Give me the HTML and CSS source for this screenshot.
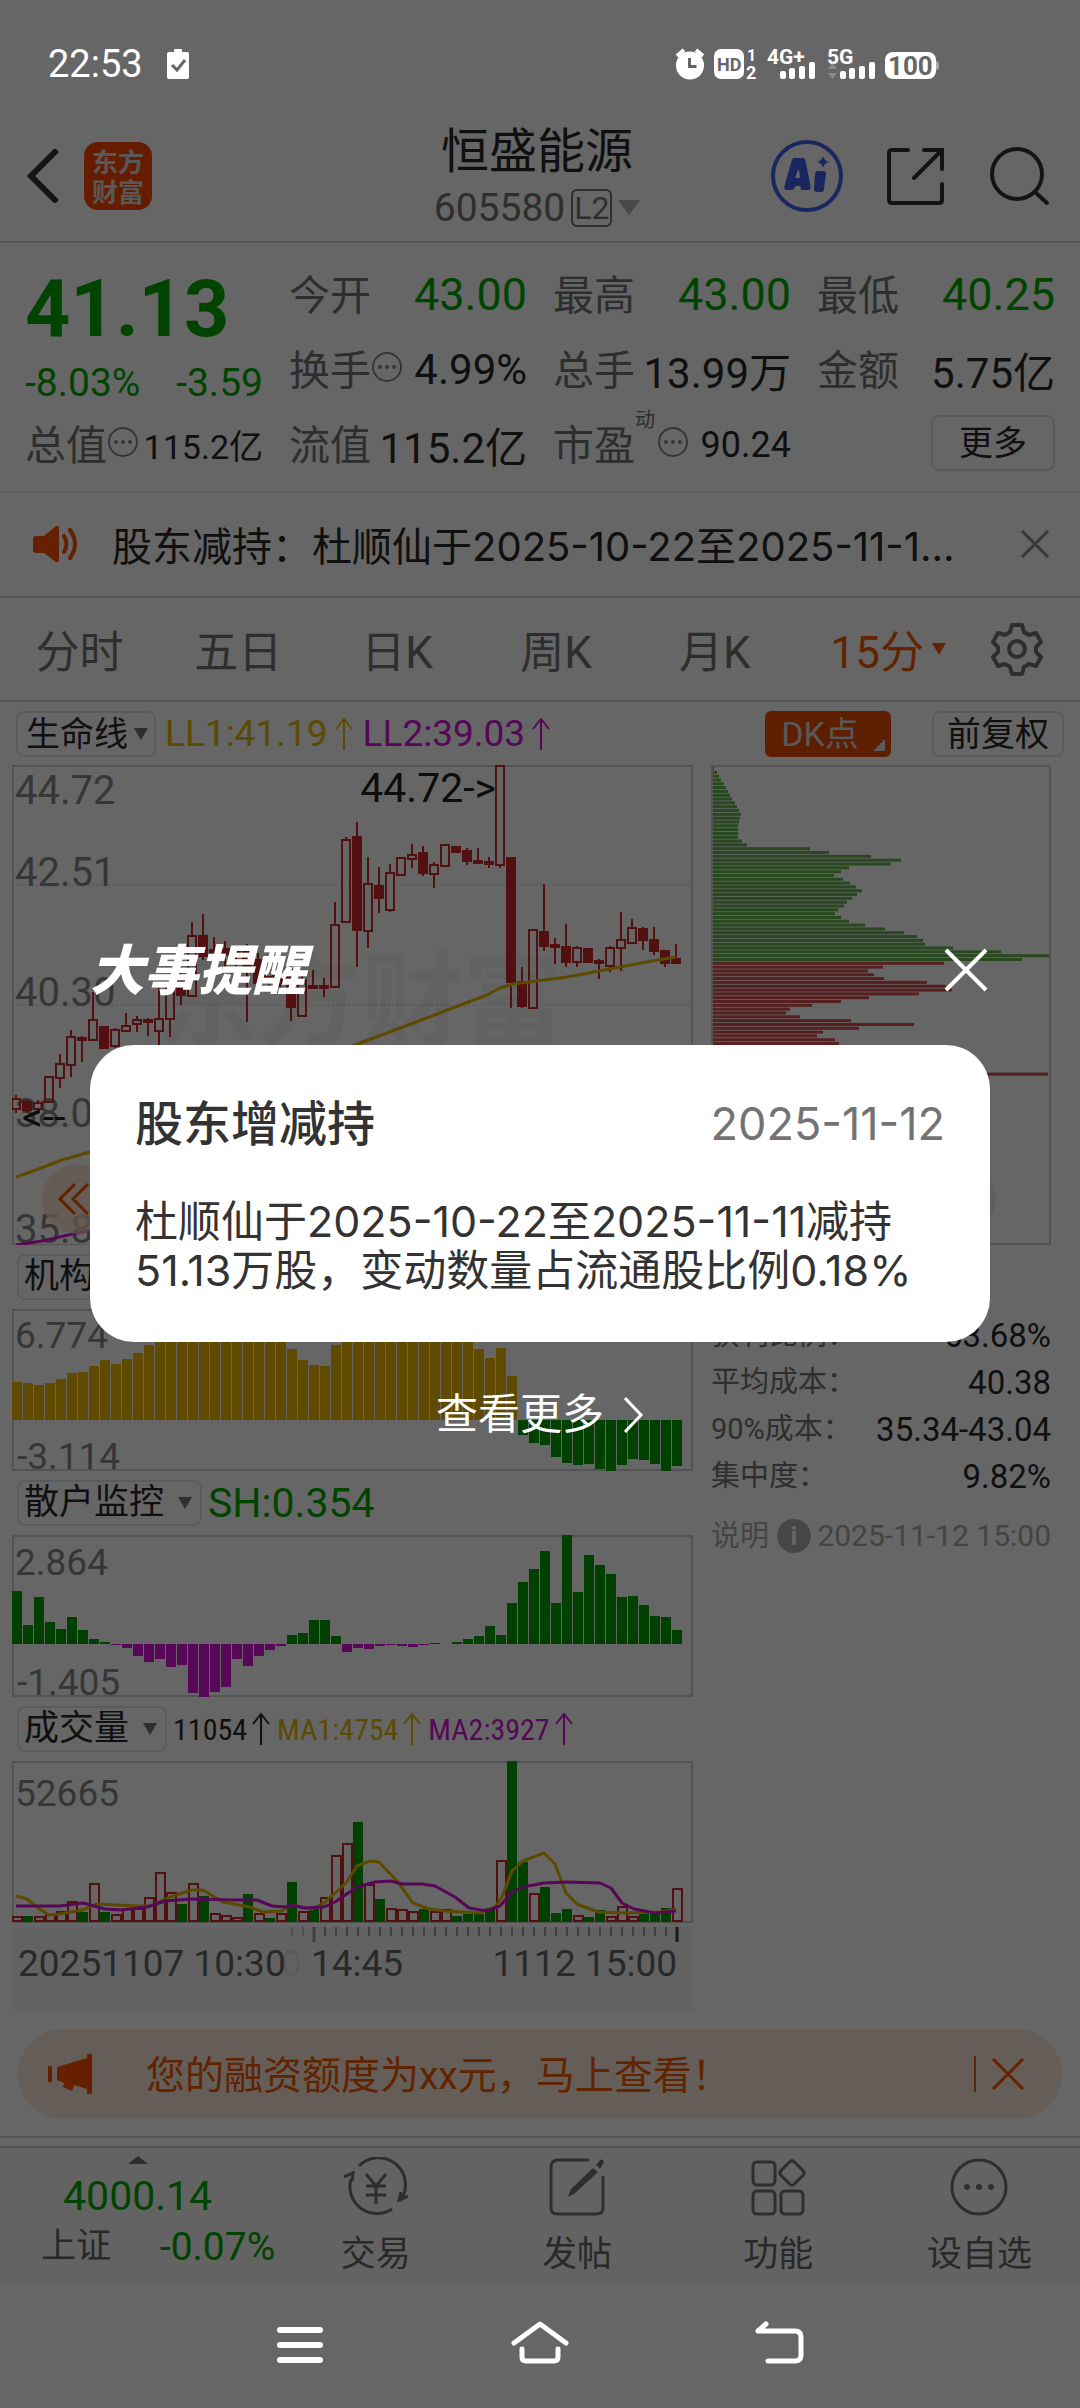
FILE: index.html
```html
<!DOCTYPE html>
<html lang="zh-CN">
<head>
<meta charset="utf-8">
<meta name="viewport" content="width=device-width, initial-scale=1">
<title>恒盛能源 605580</title>
<link rel="stylesheet" href="styles.css">
</head>
<body>
<div class="phone">

  <div class="status-bar">
    <div class="status-left">
      <span class="clock">22:53</span>
      <svg width="22" height="30" viewBox="0 0 22 30"><path fill="#fff" d="M2 3h5V1q0-1 1-1h6q1 0 1 1v2h5q2 0 2 2v23q0 2-2 2H2q-2 0-2-2V5q0-2 2-2z"/><path d="M5 16l5 5 8-10" fill="none" stroke="#666" stroke-width="3"/></svg>
    </div>
    <svg class="status-icons" width="280" height="40" viewBox="672 43 280 40">
      <g fill="#fff">
        <circle cx="690" cy="64.500" r="14"/>
        <path d="M677 55l7-6M703 55l-7-6" stroke="#fff" stroke-width="4"/>
        <rect x="714" y="48" width="30" height="30" rx="7"/>
        <text x="747" y="60" font-size="16" font-weight="700">1</text>
        <text x="746" y="78" font-size="18" font-weight="700">2</text>
        <text x="767" y="63" font-size="21" font-weight="700">4G+</text>
        <text x="827" y="63" font-size="21" font-weight="700">5G</text>
        <rect x="780" y="70" width="6" height="8" rx="2"/><rect x="789" y="67" width="6" height="11" rx="2"/><rect x="799" y="65" width="6" height="13" rx="2"/><rect x="809" y="61" width="6" height="17" rx="2"/>
        <rect x="840" y="70" width="6" height="8" rx="2"/><rect x="849" y="67" width="6" height="11" rx="2"/><rect x="859" y="65" width="6" height="13" rx="2"/><rect x="869" y="61" width="6" height="17" rx="2"/>
        <rect x="885" y="51" width="51" height="27" rx="8"/>
      </g>
      <path d="M936 60q3 0 3 4.500t-3 4.500z" fill="#aaa"/>
      <path d="M828 68l4.500-6 4.500 6zM828 72l4.500 6 4.500-6z" fill="#8a8a8a"/>
      <path d="M689.500 57v8.500h7" fill="none" stroke="#666" stroke-width="3"/>
      <g fill="#666" font-weight="700"><text x="717" y="70" font-size="18">HD</text><text x="888" y="74" font-size="26">100</text></g>
    </svg>
  </div>

  <header class="header">
    <div class="header-side">
      <button class="icon-btn" aria-label="返回"><svg width="36" height="56" viewBox="0 0 36 56"><path d="M31 4L7 28l24 24" fill="none" stroke="#333" stroke-width="6" stroke-linecap="round"/></svg></button>
      <a class="logo" href="#"><span>东方</span><span>财富</span></a>
    </div>
    <div class="stock-name">
      <h1>恒盛能源</h1>
      <div class="stock-code"><span>605580</span><span class="level">L2</span><i class="tri tri-light"></i></div>
    </div>
    <div class="header-side header-tools">
      <button class="icon-btn" aria-label="Ai"><svg width="74" height="74" viewBox="0 0 74 74"><circle cx="37" cy="37" r="34" fill="none" stroke="#4060f0" stroke-width="4"/><g fill="#4060f0"><path fill-rule="evenodd" d="M24 19h8q3 0 3.500 3l5 25q1 4-3 4h-5q-2 0-2-2v-2h-5l-1 2q-1 2-3 2h-5q-3 0-2-4l7-25q1-3 2.500-3zm4 12l-3 8h5l-1-8z"/><path d="M48 32h5q3 0 3 3l-2 15q0 3-3 3h-4q-3 0-3-3l1-15q0-3 3-3z"/><path d="M53 17q1 5 6 6-5 1-6 6-1-5-6-6 5-1 6-6z"/></g></svg></button>
      <button class="icon-btn" aria-label="分享"><svg width="60" height="60" viewBox="0 0 60 60"><path d="M22 4H6q-3 0-3 3v47q0 3 3 3h47q3 0 3-3V38M38 4h18v19M56 4L28 32" fill="none" stroke="#333" stroke-width="4" stroke-linecap="round"/></svg></button>
      <button class="icon-btn" aria-label="搜索"><svg width="62" height="62" viewBox="0 0 62 62"><circle cx="29" cy="29" r="25" fill="none" stroke="#333" stroke-width="4"/><path d="M47 47l12 11" stroke="#333" stroke-width="4" stroke-linecap="round"/></svg></button>
    </div>
  </header>

  <section class="quote">
    <div class="price-block">
      <div class="price">41.13</div>
      <div class="change"><span>-8.03%</span><span>-3.59</span></div>
    </div>
    <div class="cell"><span class="lbl">今开</span><span class="val big down">43.00</span></div>
    <div class="cell"><span class="lbl">最高</span><span class="val big down">43.00</span></div>
    <div class="cell"><span class="lbl">最低</span><span class="val big down">40.25</span></div>
    <div class="cell"><span class="lbl">换手</span><svg class="dots" viewBox="0 0 32 32"><use href="#dots"/></svg><span class="val">4.99%</span></div>
    <div class="cell"><span class="lbl">总手</span><span class="val">13.99万</span></div>
    <div class="cell"><span class="lbl">金额</span><span class="val">5.75亿</span></div>
    <div class="cell"><span class="lbl">总值</span><svg class="dots" viewBox="0 0 32 32"><use href="#dots"/></svg><span class="val small">115.2亿</span></div>
    <div class="cell"><span class="lbl">流值</span><span class="val">115.2亿</span></div>
    <div class="cell"><span class="lbl">市盈<sup>动</sup></span><svg class="dots" viewBox="0 0 32 32"><use href="#dots"/></svg><span class="val mid">90.24</span></div>
    <div class="cell cell-end"><button class="more">更多</button></div>
  </section>

  <section class="notice">
    <svg width="46" height="38" viewBox="0 0 46 38"><path fill="#ff5000" d="M3 11h8L23 1q2-1 3 1v34q-1 2-3 1L11 28H3q-3 0-3-3V14q0-3 3-3z"/><path d="M31 11q5 8 0 16M37 5q10 14 0 28" fill="none" stroke="#ff5000" stroke-width="4" stroke-linecap="round"/></svg>
    <a class="notice-text" href="#">股东减持：杜顺仙于2025-10-22至2025-11-1...</a>
    <button class="icon-btn" aria-label="关闭公告"><svg width="30" height="30" viewBox="0 0 30 30"><path d="M2 2l26 26M28 2L2 28" stroke="#888" stroke-width="3"/></svg></button>
  </section>

  <nav class="tabs">
    <button>分时</button><button>五日</button><button>日K</button><button>周K</button><button>月K</button><button class="on">15分<i class="tri"></i></button>
    <button class="gear" aria-label="设置"><svg width="54" height="54" viewBox="0 0 54 54"><path d="M22 3h10l2 7 5 3 7-2 5 9-5 5v5l5 5-5 9-7-2-5 3-2 7H22l-2-7-5-3-7 2-5-9 5-5v-5l-5-5 5-9 7 2 5-3z" fill="none" stroke="#737373" stroke-width="4" stroke-linejoin="round"/><circle cx="27" cy="27" r="8" fill="none" stroke="#737373" stroke-width="4"/></svg></button>
  </nav>

  <div class="indicator main-indicator">
    <button class="pick tight">生命线<i class="tri"></i></button>
    <span class="gold">LL1:41.19<svg class="up" viewBox="0 0 20 34"><use href="#up"/></svg></span>
    <span class="magenta">LL2:39.03<svg class="up" viewBox="0 0 20 34"><use href="#up"/></svg></span>
    <button class="dk">DK点</button>
    <button class="pick right">前复权</button>
  </div>

  <main class="charts">
    <div class="col">
      <svg class="plot" viewBox="0 0 681 480" id="kline">
        <rect class="frame" x="1" y="1" width="679" height="479"/>
        <path class="grid" d="M0 120h681M0 240h681M0 360h681"/>
        <text class="watermark" x="144" y="272">东方财富</text>
        <g class="axis axis-lg"><text x="3" y="39">44.72</text><text x="3" y="121">42.51</text><text x="3" y="241">40.30</text><text x="3" y="362">38.09</text><text x="3" y="478">35.88</text></g>
        <g id="candles"></g>
        <text class="mark" x="484" y="37" text-anchor="end">44.72-&gt;</text>
        <text class="mark" x="10" y="366">&lt;--</text>
        <path class="ln gold-ln" d="M4 412L24 405 50 395 78 387 200 335 343 280 412 254 475 230 488 223 501 219 524 216 555 212 582 207 613 201 640 196 664 192"/>
        <path class="ln mag-ln" d="M4 480L30 476 78 465"/>
        <circle cx="65" cy="434" r="35" fill="#ffddc8" opacity=".7"/>
        <path d="M63 419L48 434l15 15M76 419L61 434l15 15" fill="none" stroke="#ff5000" stroke-width="3"/>
      </svg>

      <div class="indicator"><button class="pick">机构监控<i class="tri"></i></button></div>
      <svg class="plot" viewBox="0 0 681 162">
        <rect class="frame" x="1" y="1" width="679" height="160"/>
        <g id="inst"></g>
        <g class="axis"><text x="3" y="39">6.774</text><text x="5" y="160">-3.114</text></g>
      </svg>

      <div class="indicator"><button class="pick">散户监控<i class="tri"></i></button><span class="down sh">SH:0.354</span></div>
      <svg class="plot" viewBox="0 0 681 162">
        <rect class="frame" x="1" y="1" width="679" height="160"/>
        <g id="retail"></g>
        <g class="axis"><text x="3" y="40">2.864</text><text x="5" y="160">-1.405</text></g>
      </svg>

      <div class="indicator narrow"><button class="pick">成交量<i class="tri"></i></button><span>11054<svg class="up" viewBox="0 0 20 34"><use href="#up"/></svg></span><span class="gold">MA1:4754<svg class="up" viewBox="0 0 20 34"><use href="#up"/></svg></span><span class="magenta">MA2:3927<svg class="up" viewBox="0 0 20 34"><use href="#up"/></svg></span></div>
      <svg class="plot" viewBox="0 0 681 162">
        <rect class="frame" x="1" y="1" width="679" height="160"/>
        <g id="volume"></g>
        <g class="axis"><text x="3" y="45">52665</text></g>
        <path class="ln gold-ln" d="M4 135L15 138 26 147 37 154 48 153 71 149 84 143 126 145 138 145 158 136 180 129 191 129 211 141 238 146 251 151 269 150 280 144 300 148 312 142 334 122 345 105 358 100 367 101 385 120 401 142 417 148 434 150 468 152 483 146 490 136 500 110 511 100 532 92 543 103 554 132 565 143 586 151 613 152 649 151 664 148"/>
        <path class="ln mag-ln" d="M4 145L48 145 71 142 93 148 109 149 135 146 153 140 180 138 225 139 245 139 260 145 274 146 280 144 292 147 312 146 323 141 345 126 363 121 379 120 390 123 410 123 423 125 443 136 457 147 475 150 488 145 500 131 511 126 532 122 555 121 588 122 599 127 610 142 622 148 643 152 664 150"/>
      </svg>
      <svg class="plot timeline" viewBox="0 0 681 84">
        <rect width="681" height="84" fill="#f6f6f6"/>
        <g id="ticks" stroke="#444"></g>
        <g class="dates"><text x="269" y="49" opacity=".12">0</text><text x="6" y="49">20251107 10:30</text><text x="299" y="49">14:45</text><text x="665" y="49" text-anchor="end">1112 15:00</text></g>
      </svg>
    </div>

    <aside class="col">
      <svg class="plot" viewBox="0 0 340 480">
        <g id="chips"></g>
        <path class="frame" d="M1 480V1h338M1 479h338"/><path d="M339 0v480" stroke="#ccc" stroke-width="2"/>
        <circle cx="250" cy="434" r="35" fill="#ffddc8" opacity=".7"/>
      </svg>
      <dl class="stats">
        <div><dt>获利比例：</dt><dd>63.68%</dd></div>
        <div><dt>平均成本：</dt><dd>40.38</dd></div>
        <div><dt>90%成本：</dt><dd>35.34-43.04</dd></div>
        <div><dt>集中度：</dt><dd>9.82%</dd></div>
      </dl>
      <div class="explain"><span>说明</span><i class="info">i</i><time>2025-11-12 15:00</time></div>
    </aside>
  </main>

  <section class="banner">
    <svg width="46" height="40" viewBox="0 0 46 40"><path fill="#ff5000" d="M0 12h4v16H0zM9 13L39 4V0h5v40h-5v-5l-13-4-2 6-9-4 1-4-7-3z"/></svg>
    <a href="#">您的融资额度为xx元，马上查看！</a>
    <button class="icon-btn" aria-label="关闭横幅"><svg width="32" height="32" viewBox="0 0 32 32"><path d="M1 1l30 30M31 1L1 31" stroke="#ff5000" stroke-width="3"/></svg></button>
  </section>

  <nav class="bottom-nav">
    <a class="index" href="#">
      <i class="tri-up"></i>
      <span class="index-val down">4000.14</span>
      <span class="index-row"><span>上证</span><span class="down pct">-0.07%</span></span>
    </a>
    <a href="#"><svg viewBox="0 0 64 60"><g fill="none" stroke="#737373" stroke-width="3"><path d="M15 9A27 27 0 0 1 56 44M48 52A27 27 0 0 1 7 22M0 20l9-4-1 8M64 39l-9 4 2-8M22 17l10 12 10-12M32 29v18M22 29h20M22 38h20"/></g></svg>交易</a>
    <a href="#"><svg viewBox="0 0 64 60"><g fill="none" stroke="#737373" stroke-width="3"><path d="M44 3H13q-7 0-7 7v41q0 6 7 6h38q7 0 7-6V19"/></g><path fill="#737373" d="M51 8l4-5q2-1 3 0l1 2-4 7zM48 11l5 4-24 22-6 3 3-8z"/></svg>发帖</a>
    <a href="#"><svg viewBox="0 0 64 60"><g fill="none" stroke="#737373" stroke-width="3"><rect x="7" y="5" width="22" height="23" rx="4"/><rect x="7" y="34" width="22" height="23" rx="4"/><rect x="35" y="34" width="22" height="23" rx="4"/><rect x="36.500" y="6.500" width="19" height="19" rx="3" transform="rotate(45 46 16)"/></g></svg>功能</a>
    <a href="#"><svg viewBox="0 0 64 60"><circle cx="32" cy="30" r="27" fill="none" stroke="#737373" stroke-width="3"/><g fill="#737373"><circle cx="20" cy="30" r="3"/><circle cx="32" cy="30" r="3"/><circle cx="44" cy="30" r="3"/></g></svg>设自选</a>
  </nav>

  <div class="system-nav">
    <button aria-label="菜单"><svg width="60" height="50" viewBox="0 0 60 50"><path d="M10 10h40M10 25h40M10 40h40" stroke="#fff" stroke-width="6" stroke-linecap="round"/></svg></button>
    <button aria-label="主页"><svg width="60" height="50" viewBox="0 0 60 50"><g fill="none" stroke="#fff" stroke-width="5" stroke-linecap="round" stroke-linejoin="round"><path d="M4 23L30 4l26 19M12 29v8q0 4 4 4h28q4 0 4-4v-8"/></g></svg></button>
    <button aria-label="返回上一页"><svg width="60" height="50" viewBox="0 0 60 50"><path d="M16 4l-8 7h37q6 0 6 6v18q0 6-6 6H18" fill="none" stroke="#fff" stroke-width="5" stroke-linecap="round" stroke-linejoin="round"/></svg></button>
  </div>

  <div class="overlay">
    <div class="dialog" role="dialog" aria-labelledby="dlg-title">
      <div class="dialog-head">
        <h2 id="dlg-title">大事提醒</h2>
        <button class="icon-btn" aria-label="关闭"><svg width="46" height="46" viewBox="0 0 46 46"><path d="M3 3l40 40M43 3L3 43" stroke="#fff" stroke-width="4"/></svg></button>
      </div>
      <div class="card">
        <div class="card-head"><h3>股东增减持</h3><time>2025-11-12</time></div>
        <p>杜顺仙于2025-10-22至2025-11-11减持51.13万股，变动数量占流通股比例0.18%</p>
      </div>
      <button class="see-more">查看更多<svg width="20" height="36" viewBox="0 0 20 36"><path d="M1 1l16 17L1 35" fill="none" stroke="#fff" stroke-width="3"/></svg></button>
    </div>
  </div>
</div>

<svg width="0" height="0" class="symbols">
  <symbol id="dots" viewBox="0 0 32 32"><circle cx="16" cy="16" r="14" fill="none" stroke="#888" stroke-width="2"/><g fill="#888"><circle cx="9" cy="16" r="2"/><circle cx="16" cy="16" r="2"/><circle cx="23" cy="16" r="2"/></g></symbol>
  <symbol id="up" viewBox="0 0 20 34"><path d="M10 33V2M2 12l8-10 8 10" fill="none" stroke="currentColor" stroke-width="2"/></symbol>
</svg>
<script src="script.js"></script>
</body>
</html>
```
FILE: styles.css
```css
* { box-sizing: border-box; }
body { margin: 0; background: #fff; color: #2a2a2a; font-family: Roboto, "Noto Sans CJK SC", sans-serif; }
h1, h2, h3, p, dl, dd { margin: 0; font-weight: 400; }
button { margin: 0; padding: 0; border: 0; background: none; color: inherit; font: inherit; }
a { color: inherit; text-decoration: none; }
svg { display: block; flex: none; }
i { font-style: normal; }
.phone { position: relative; }
.symbols { position: absolute; }
.icon-btn { display: flex; }
.down { color: #0a0; }
.gold { color: #e6b800; }
.magenta { color: #d814d8; }
.tri { width: 0; height: 0; border: 7px solid transparent; border-top: 12px solid #737373; border-bottom: 0; }

.status-bar { position: relative; z-index: 2; display: flex; align-items: center; justify-content: space-between; height: 118px; padding: 10px 128px 0 48px; color: #fff; }
.status-left { display: flex; align-items: center; gap: 24px; }
.clock { font-size: 38px; }

.header { display: flex; justify-content: space-between; align-items: center; height: 125px; padding: 0 30px 8px 24px; border-bottom: 2px solid #d8d8d8; }
.header-side { display: flex; align-items: center; gap: 24px; flex: 1; }
.header-tools { justify-content: flex-end; gap: 42px; }
.logo { display: flex; flex-direction: column; justify-content: center; width: 68px; height: 68px; border-radius: 14px; background: #ff4800; color: #ddd; font: 700 26px/30px "Noto Sans CJK SC", sans-serif; text-align: center; }
.stock-name { text-align: center; }
.stock-name h1 { margin-bottom: 4px; font-size: 48px; line-height: 60px; }
.stock-code { display: flex; align-items: center; justify-content: center; gap: 6px; color: #737373; font-size: 39px; line-height: 44px; }
.level { width: 41px; border: 2px solid #737373; border-radius: 6px; font-size: 32px; line-height: 34px; }
.tri-light { border-width: 15px 11px 0; border-top-color: #b5b5b5; }

.quote { display: grid; grid-template-columns: repeat(4, 1fr); grid-template-rows: repeat(3, 75px); column-gap: 26px; padding: 14px 25px 9px; border-bottom: 2px solid #e6e6e6; }
.price-block { grid-row: span 2; color: #0a0; }
.price { font-size: 79px; line-height: 104px; font-weight: 700; }
.change { display: flex; justify-content: space-between; font-size: 39px; line-height: 44px; }
.cell { display: flex; align-items: center; white-space: nowrap; }
.cell-end { justify-content: flex-end; }
.lbl { position: relative; padding-bottom: 6px; color: #737373; font-size: 41px; }
.lbl sup { position: absolute; left: 82px; top: -4px; font-size: 20px; line-height: 24px; }
.val { margin-left: auto; font-size: 42px; }
.big { font-size: 45px; }
.mid { font-size: 36px; }
.small { font-size: 34px; }
.dots { width: 32px; height: 32px; margin-bottom: 6px; }
.lbl:has(sup) + .dots { margin-left: 22px; }
.more { width: 124px; height: 56px; margin-bottom: 4px; border: 2px solid #e0e0e0; border-radius: 8px; font-size: 34px; line-height: 48px; }

.notice { display: flex; align-items: center; gap: 33px; height: 105px; padding: 0 30px 2px 33px; border-bottom: 2px solid #d8d8d8; font-size: 40px; }
.notice-text { flex: 1; font-family: Inter, "Noto Sans CJK SC", sans-serif; white-space: nowrap; }

.tabs { display: flex; align-items: center; height: 104px; border-bottom: 2px solid #d8d8d8; color: #737373; font-size: 44px; }
.tabs button { display: flex; align-items: center; justify-content: center; gap: 8px; flex: 159 0 0; padding: 0 7px; }
.tabs .gear { flex: 124 0 0; }
.tabs .on { justify-content: flex-end; color: #f25a00; }
.tabs .on .tri { border-top-color: #f25a00; }

.indicator { display: flex; align-items: center; gap: 6px; height: 64px; padding-left: 5px; font-size: 41px; white-space: nowrap; }
.main-indicator { gap: 9px; padding: 0 16px; font-size: 37px; height: 63px; }
.indicator span { display: flex; align-items: center; gap: 6px; }
.up { width: 20px; height: 34px; }
.pick { display: flex; align-items: center; gap: 14px; height: 46px; padding: 0 8px 0 5px; border: 2px solid #e4e4e4; border-radius: 8px; font-size: 35px; line-height: 42px; }
.tight { gap: 6px; padding: 0 6px 0 8px; }
.main-indicator .pick { font-size: 34px; }
.pick.right { margin-left: 32px; padding: 0 13px; }
.dk { margin-left: auto; width: 126px; height: 46px; padding-right: 16px; border-radius: 6px; background: linear-gradient(135deg, transparent 50%, #e0e0e0 50%) right 6px bottom 6px / 12px 12px no-repeat #ea4c00; color: #ddd; font-size: 34px; line-height: 46px; }
.narrow { gap: 6px; font-family: "Liberation Sans Narrow", "Roboto Condensed", Roboto, sans-serif; font-size: 30px; }
.narrow .pick { font-family: Roboto, "Noto Sans CJK SC", sans-serif; }
.narrow span { gap: 4px; }

.charts { display: grid; grid-template-columns: 681fr 340fr; gap: 18px; padding: 0 29px 0 12px; }
.plot { width: 100%; height: auto; overflow: hidden; }
.timeline { margin-top: 4px; }
.frame { fill: none; stroke: #d0d0d0; stroke-width: 2; }
.grid { stroke: #ccc; stroke-width: 1; stroke-dasharray: 2 2; }
.watermark { font-size: 102px; font-weight: 700; fill: #000; opacity: .03; }
.axis { font-size: 37px; fill: #888; }
.axis-lg { font-size: 40px; }
.mark { font-size: 41px; fill: #222; }
.dates { font-size: 37px; fill: #666; }
.ln { fill: none; stroke-width: 3; stroke-linejoin: round; }
.gold-ln { stroke: #e6b800; }
.mag-ln { stroke: #d814d8; }
.hollow { fill: none; stroke: #cc2a2a; stroke-width: 2; }
.solid { fill: #cc2a2a; stroke: #cc2a2a; stroke-width: 2; }

.stats { padding-top: 67px; font-size: 33px; line-height: 47px; }
.stats div { display: flex; justify-content: space-between; white-space: nowrap; }
.stats dt { color: #737373; font-size: 29px; }
.explain { display: flex; align-items: center; margin-top: 14px; color: #aaa; font-size: 29px; line-height: 44px; white-space: nowrap; }
.explain time { margin-left: auto; font-size: 30px; }
.info { width: 34px; height: 34px; margin-left: 8px; border-radius: 50%; background: #b0b0b0; color: #fff; font-size: 26px; font-weight: 700; line-height: 34px; text-align: center; }

.banner { display: flex; align-items: center; gap: 52px; height: 90px; margin: 18px 18px 17px; padding: 0 38px 0 30px; border-radius: 45px; background: #fae9dc; color: #f25a00; font-size: 39px; }
.banner a { flex: 1; padding-bottom: 4px; }
.banner .icon-btn { padding: 2px 0 2px 16px; border-left: 2px solid #f25a00; }

.bottom-nav { display: grid; grid-template-columns: 275fr repeat(4, 201fr); height: 147px; padding-top: 10px; border-top: 2px solid #d0d0d0; color: #666; font-size: 35px; background: linear-gradient(#fff 8px, #d0d0d0 8px, #d0d0d0 10px, #f7f7f7 10px); }
.bottom-nav > a { display: flex; flex-direction: column; align-items: center; line-height: 46px; padding-top: 9px; gap: 15px; }
.bottom-nav svg { width: 64px; height: 60px; }
.bottom-nav .index { gap: 0; padding: 8px 0 0; }
.tri-up { border: 10px solid transparent; border-top: 0; border-bottom: 8px solid #737373; }
.index-val { font-size: 41px; line-height: 64px; }
.index-row { display: flex; justify-content: space-between; align-self: flex-end; width: 234px; margin-top: -4px; }
.pct { font-size: 39px; }

.system-nav { position: relative; z-index: 2; display: flex; justify-content: center; align-items: flex-start; gap: 180px; height: 125px; padding-top: 37px; }

.overlay { position: absolute; inset: 0; z-index: 1; display: flex; align-items: center; justify-content: center; padding-bottom: 26px; background: rgba(0, 0, 0, .6); }
.dialog { display: flex; flex-direction: column; align-items: center; flex: 1; margin: 0 90px; }
.dialog-head { display: flex; align-items: center; justify-content: space-between; align-self: stretch; height: 56px; margin-bottom: 47px; padding-right: 1px; color: #fff; }
.dialog-head h2 { padding-top: 4px; font-size: 54px; line-height: 56px; font-weight: 900; font-style: italic; }
.card { width: 100%; min-height: 297px; padding: 44px 45px; border-radius: 44px; background: #fff; color: #333; font-family: Inter, "Noto Sans CJK SC", sans-serif; }
.card-head { display: flex; align-items: center; justify-content: space-between; line-height: 70px; color: #737373; font-size: 45px; }
.card-head h3 { color: #333; font-size: 48px; font-weight: 500; }
.card p { margin-top: 38px; font-size: 43px; line-height: 49px; }
.see-more { display: flex; align-items: center; gap: 20px; margin-top: 48px; color: #fff; font-size: 42px; line-height: 50px; }
```
FILE: script.js
```js
const NS = "http://www.w3.org/2000/svg";
const STEP = 11;

function add(parent, name, attrs) {
  const el = document.createElementNS(NS, name);
  for (const key in attrs) el.setAttribute(key, attrs[key]);
  parent.appendChild(el);
}

// Each candle: high, body top, body bottom, low, closed lower than it opened
const candles = [
  [330,334,344,348,0],[335,337,345,347,1],[335,338,344,346,0],[312,312,337,338,0],[289,299,313,323,0],
  [265,272,300,312,0],[271,273,275,297,1],[227,255,275,275,0],[262,262,283,283,1],[263,265,281,283,0],
  [248,261,266,266,0],[251,255,259,267,0],[253,255,257,271,1],[223,254,266,282,0],[218,223,254,272,0],
  [205,212,230,240,1],[157,171,231,231,0],[149,171,191,195,1],[172,185,192,205,1],[176,184,190,205,1],
  [182,184,188,205,1],[179,185,205,257,1],[188,195,218,227,1],[195,205,212,222,0],[195,208,218,225,1],
  [200,205,242,256,1],[210,215,251,251,0],[205,221,223,224,1],[213,221,223,232,1],[137,160,222,222,0],
  [72,75,157,157,0],[57,72,165,202,1],[92,119,166,183,0],[102,121,133,148,1],[99,108,145,147,0],
  [93,93,110,110,0],[79,90,94,103,0],[81,88,108,111,1],[97,100,109,123,0],[80,80,101,102,0],
  [81,82,87,88,1],[83,86,96,100,1],[83,96,98,99,1],[92,97,99,103,1],[0,1,100,103,0],
  [93,93,217,243,1],[202,217,241,243,1],[165,165,243,243,0],[119,167,181,186,1],[173,180,182,199,1],
  [159,182,197,202,1],[181,183,197,202,0],[184,184,197,197,1],[194,196,198,214,1],[181,183,201,207,0],
  [147,175,183,206,0],[154,163,178,179,0],[162,164,175,185,1],[162,175,186,190,1],[186,186,198,202,1],
  [179,194,198,199,1]
];
const candleBox = document.getElementById("candles");
candles.forEach(([high, top, bottom, low, fell], i) => {
  const x = 4 + STEP * i;
  const cls = fell ? "solid" : "hollow";
  add(candleBox, "path", { class: cls, d: `M${x} ${high}V${top}M${x} ${bottom}V${low}` });
  add(candleBox, "rect", { class: cls, x: x - 4, y: top, width: 8, height: Math.max(bottom - top, 1) });
});

function bars(id, zero, values, up, down) {
  const box = document.getElementById(id);
  values.forEach((v, i) => {
    if (v) add(box, "rect", { x: STEP * i, y: v > 0 ? zero - v : zero, width: 10, height: Math.abs(v), fill: v > 0 ? up : down });
  });
}
bars("inst", 111, [38,37,35,37,41,47,48,54,60,56,61,67,75,80,84,90,94,97,99,99,97,94,88,82,79,71,60,55,54,75,84,92,99,103,106,106,104,102,98,94,89,83,71,62,72,44,-15,-23,-25,-37,-43,-45,-44,-49,-51,-45,-39,-40,-44,-51,-46], "#f0b900", "#00a000");
bars("retail", 109, [53,19,47,22,15,27,14,5,2,-1,-4,-12,-18,-15,-23,-21,-49,-53,-48,-43,-15,-22,-12,-6,-2,9,11,24,24,8,-8,-4,-5,-2,-1,-2,-3,-1,1,0,2,5,8,18,9,41,62,75,93,41,109,52,89,79,70,47,48,39,28,27,14], "#00a000", "#dc14dc");

// Volume: positive for a rising bar (hollow red), negative for a falling one (green)
const volume = [6,-6,6,8,11,21,-10,39,-10,8,14,14,25,50,30,-18,39,-26,9,7,5,-28,9,-4,9,-40,11,-13,25,67,79,-100,38,-23,14,13,11,-13,11,13,-6,-8,-8,-14,62,-162,-60,29,-35,-9,-13,7,-5,-12,6,16,6,-8,-8,-14,34];
const volumeBox = document.getElementById("volume");
volume.forEach((v, i) => {
  const h = Math.abs(v);
  if (v < 0) add(volumeBox, "rect", { x: STEP * i, y: 161 - h, width: 10, height: h, fill: "#00a000" });
  else add(volumeBox, "rect", { class: "hollow", x: STEP * i + 1, y: 162 - h, width: 9, height: h - 2 });
});

const ticks = document.getElementById("ticks");
for (let i = 0; i < 36; i++) {
  const major = i === 2 || i === 35;
  add(ticks, "path", { d: `M${280 + STEP * i} 0v${major ? 15 : 9}`, "stroke-width": major ? 3 : 1, opacity: i < 3 ? 0.5 : 1 });
}

const chips = [2,5,7,9,12,14,16,18,20,23,25,27,29,28,27,26,26,26,26,30,35,98,117,159,189,179,137,129,122,131,138,144,150,145,140,135,132,126,123,129,137,153,173,192,205,211,213,241,289,339,310,232,171,156,162,172,215,234,240,207,157,129,100,78,74,88,139,202,147,111,105,123,127,120,110,100,90,80,70,60,336];
const chipBox = document.getElementById("chips");
chips.forEach((w, i) => {
  add(chipBox, "rect", { x: 1, y: 2 + 3.82 * i, width: w, height: 3, fill: i < 51 ? "#64b64e" : "#d65050" });
});
```
